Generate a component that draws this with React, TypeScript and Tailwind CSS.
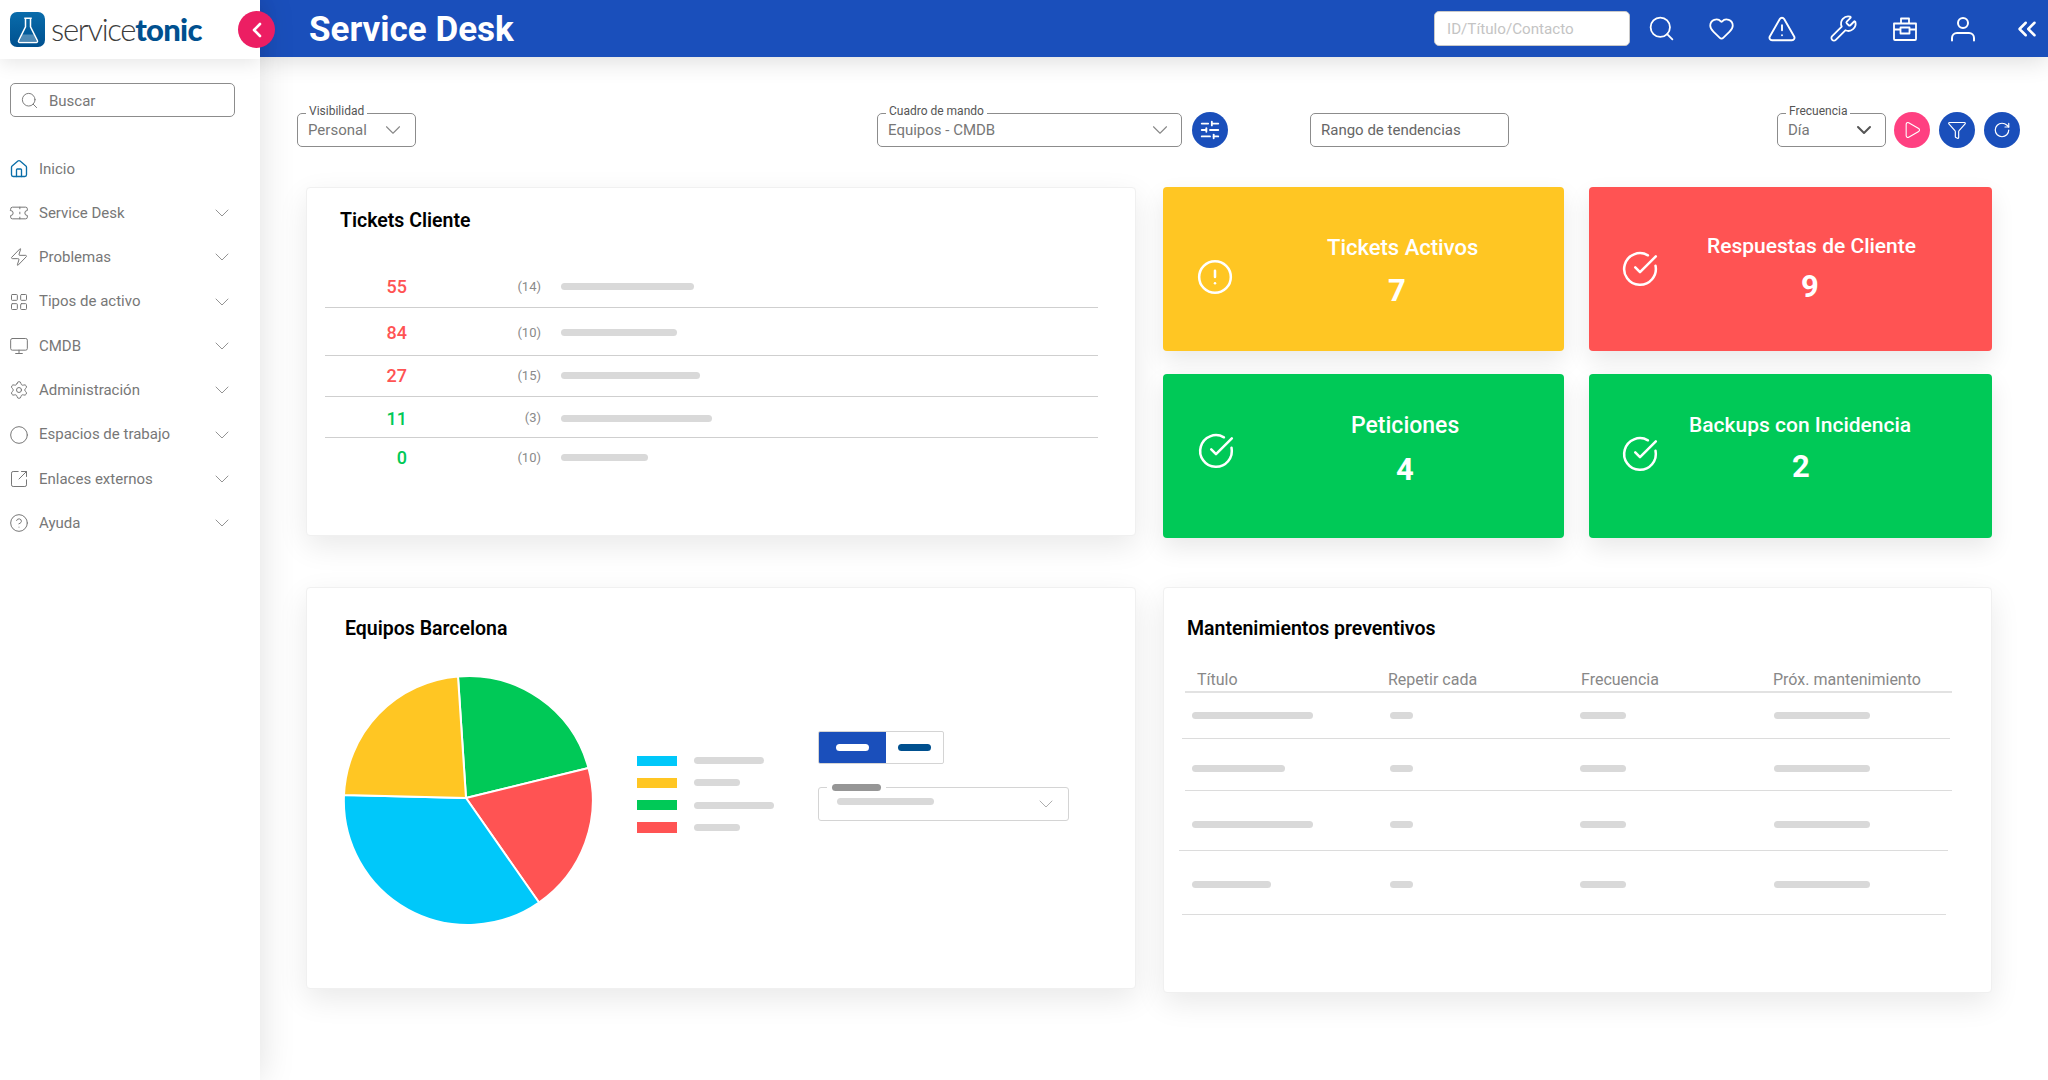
import {
  House, Ticket, Zap, LayoutGrid, Monitor, Settings, Circle, SquareArrowOutUpRight, CircleHelp,
  ChevronDown, ChevronLeft, ChevronsLeft, Search, Heart, TriangleAlert, Wrench,
  Play, Funnel, RotateCw, SlidersHorizontal, CircleCheckBig, CircleAlert,
} from "lucide-react";

const navItems = [
  { label: "Service Desk", icon: Ticket },
  { label: "Problemas", icon: Zap },
  { label: "Tipos de activo", icon: LayoutGrid },
  { label: "CMDB", icon: Monitor },
  { label: "Administración", icon: Settings },
  { label: "Espacios de trabajo", icon: Circle },
  { label: "Enlaces externos", icon: SquareArrowOutUpRight },
  { label: "Ayuda", icon: CircleHelp },
];

const ticketRows = [
  { value: "55", count: "(14)", bar: "w-[133px]", color: "text-[#ff5353]", row: "h-[42px]" },
  { value: "84", count: "(10)", bar: "w-[116px]", color: "text-[#ff5353]", row: "h-[47.5px] pt-[3px]" },
  { value: "27", count: "(15)", bar: "w-[139px]", color: "text-[#ff5353]", row: "h-[41.5px]" },
  { value: "11", count: "(3)", bar: "w-[151px]", color: "text-[#00c957]", row: "h-[41px] pt-[2px]" },
  { value: "0", count: "(10)", bar: "w-[87px]", color: "text-[#00c957]", row: "h-[44px] pb-[5px] !border-b-0" },
];

const legend = [
  { color: "bg-[#00c8fa]", bar: "w-[70px]" },
  { color: "bg-[#ffc623]", bar: "w-[46px]" },
  { color: "bg-[#00c957]", bar: "w-[80px]" },
  { color: "bg-[#ff5353]", bar: "w-[46px]" },
];

const maintRows = [
  { title: "w-[121px]", row: "h-[46px] ml-[18px] w-[768px]", bar: "mt-[1px] pl-[10px]" },
  { title: "w-[93px]", row: "h-[52px] ml-[21px] w-[767px]", bar: "mt-[9px] pl-[7px]" },
  { title: "w-[121px]", row: "h-[60px] ml-[15px] w-[769px]", bar: "mt-[9px] pl-[13px]" },
  { title: "w-[79px]", row: "h-[64px] ml-[18px] w-[764px]", bar: "mt-[5px] pl-[10px]" },
];

function Bar({ className }: { className: string }) {
  return <div className={"h-[7px] rounded-full bg-[#d9d9d9] " + className} />;
}

function Field({ label, text, className, chevron, stroke = 1 }: { label: string; text: string; className: string; chevron: string; stroke?: number }) {
  return (
    <div className={"relative flex h-[34px] items-center justify-between rounded-[5px] border border-[#8c8c8c] pl-[10px] text-[15px] text-[#777] " + className}>
      <span className="absolute left-[8px] top-[-10px] bg-white px-[3px] text-[12px] leading-[14px] text-[#555]">{label}</span>
      <span>{text}</span>
      <ChevronDown className={chevron} strokeWidth={stroke} />
    </div>
  );
}

function RoundButton({ color, children, className = "" }: { color: string; children: React.ReactNode; className?: string }) {
  return <div className={"flex h-[36px] w-[36px] items-center justify-center rounded-full text-white " + color + " " + className}>{children}</div>;
}

function StatCard(props: { title: string; value: string; color: string; icon: "alert" | "check"; iconClass: string; titleClass: string; valueClass: string }) {
  const Icon = props.icon === "alert" ? CircleAlert : CircleCheckBig;
  return (
    <div className={"relative h-[163.5px] rounded-[4px] text-white shadow-[0_10px_24px_rgba(0,0,0,0.09)] " + props.color}>
      <Icon className={"absolute h-[38px] w-[38px] " + props.iconClass} strokeWidth={1.6} />
      <div className={"absolute whitespace-nowrap text-center font-medium leading-[26px] " + props.titleClass}>{props.title}</div>
      <div className={"absolute text-center text-[31px] font-bold leading-[36px] " + props.valueClass}>{props.value}</div>
    </div>
  );
}

export default function App() {
  return (
    <div className="flex h-[1080px] w-full overflow-hidden bg-white text-[#777] [font-family:Roboto,sans-serif]">
      <aside className="relative z-20 flex w-[260px] shrink-0 flex-col bg-white shadow-[0_0_34px_rgba(0,0,0,0.13)]">
        <div className="flex h-[59px] items-center pl-[10px] shadow-[0_4px_18px_rgba(0,0,0,0.1)]">
          <div className="flex h-[35px] w-[35px] items-center justify-center rounded-[7px] bg-gradient-to-b from-[#0a6cab] to-[#00508f]">
            <svg viewBox="0 0 24 24" className="h-[30px] w-[30px]" fill="none" stroke="white" strokeWidth="1.2">
              <path d="M9 2.500h6M10 2.500v7L4.500 20.500a1 1 0 0 0 1 1.500h13a1 1 0 0 0 1-1.500L14 9.500v-7" />
              <path d="M7.500 15.500h9l2.300 5.700H5.200z" fill="white" stroke="none" opacity="0.3" />
            </svg>
          </div>
          <div className="ml-[6px] whitespace-nowrap text-[31px] leading-none [font-family:Lato,sans-serif]">
            <span className="font-light tracking-[-1.3px] text-[#3c3c3c]">service</span>
            <span className="font-black tracking-[-0.7px] text-[#00508f]">tonic</span>
          </div>
        </div>

        <div className="mx-[10px] mt-[24px] flex h-[34px] w-[225px] items-center rounded-[5px] border border-[#8c8c8c] pl-[9px] text-[15px] text-[#777]">
          <Search className="h-[19px] w-[19px]" strokeWidth={1.2} />
          <span className="ml-[10px] pt-[2px]">Buscar</span>
        </div>

        <nav className="mt-[30px] flex flex-col">
          <div className="flex h-[44px] items-center pl-[9px] text-[15px]">
            <House className="h-[20px] w-[20px] text-[#0a6ea8]" strokeWidth={1.6} />
            <span className="ml-[10px]">Inicio</span>
          </div>
          {navItems.map((item) => (
            <div key={item.label} className="flex h-[44.300px] items-center pl-[9px] text-[15px]">
              <item.icon className="h-[20px] w-[20px] text-[#777]" strokeWidth={1.2} />
              <span className="ml-[10px] flex-1">{item.label}</span>
              <ChevronDown className="mr-[26px] h-[24px] w-[24px] text-[#888]" strokeWidth={0.9} />
            </div>
          ))}
        </nav>
      </aside>

      <div className="relative flex min-w-0 flex-1 flex-col">
        <header className="relative z-10 flex h-[57px] items-center bg-[#1a4fbb] pl-[49px] text-white shadow-[0_4px_24px_rgba(0,0,0,0.14)]">
          <h1 className="pt-[1px] text-[35px] font-bold leading-none">Service Desk</h1>
          <div className="ml-auto flex h-[35px] w-[196px] items-center rounded-[5px] border border-[#c9c9c9] bg-white pl-[12px] pt-[1px] text-[15.2px] text-[#c4c4c4]">ID/Título/Contacto</div>
          <Search className="ml-[17px] h-[29px] w-[29px]" strokeWidth={1.5} />
          <Heart className="ml-[32px] h-[27px] w-[27px]" strokeWidth={1.6} />
          <TriangleAlert className="ml-[32px] h-[30px] w-[30px]" strokeWidth={1.5} />
          <Wrench className="ml-[32px] h-[29px] w-[29px]" strokeWidth={1.5} />
          <svg viewBox="0 0 24 24" className="ml-[35px] h-[24px] w-[24px]" fill="none" stroke="white" strokeWidth="1.8" strokeLinejoin="round">
            <path d="M1 6.500h22v15.500a1 1 0 0 1-1 1H2a1 1 0 0 1-1-1zM8 6.500V1.500h8v5M1 12.500h6.500M16.500 12.500H23" />
            <path d="M7.500 10.500h9v6h-9z" />
          </svg>
          <svg viewBox="0 0 26 26" className="ml-[33px] h-[26px] w-[26px]" fill="none" stroke="white" strokeWidth="2" strokeLinecap="round">
            <circle cx="13" cy="7" r="5" />
            <path d="M2 24.500v-2.500a5 5 0 0 1 5-5h12a5 5 0 0 1 5 5v2.500" />
          </svg>
          <ChevronsLeft className="ml-[36px] mr-[6px] h-[30px] w-[30px]" strokeWidth={2} />
        </header>

        <div className="absolute left-[-22px] top-[11px] z-30 flex h-[37px] w-[37px] items-center justify-center rounded-full bg-[#ec1e63] text-white">
          <ChevronLeft className="h-[24px] w-[24px]" strokeWidth={2.6} />
        </div>

        <div className="flex items-center pl-[37px] pt-[55px]">
          <Field label="Visibilidad" text="Personal" className="w-[119px]" chevron="mr-[9px] h-[26px] w-[26px] text-[#888]" />
          <Field label="Cuadro de mando" text="Equipos - CMDB" className="ml-[461px] w-[305px]" chevron="mr-[8px] h-[26px] w-[26px] text-[#888]" />
          <RoundButton color="bg-[#1a4fbb]" className="ml-[10px]"><SlidersHorizontal className="h-[22px] w-[22px]" strokeWidth={2} /></RoundButton>
          <div className="ml-[82px] flex h-[34px] w-[199px] items-center rounded-[5px] border border-[#8c8c8c] pl-[10px] text-[15px] text-[#666]">Rango de tendencias</div>
          <Field label="Frecuencia" text="Día" className="ml-[268px] w-[109px]" chevron="mr-[9px] h-[24px] w-[24px] text-[#555]" stroke={2} />
          <RoundButton color="bg-[#ff4081]" className="ml-[8px]"><Play className="h-[20px] w-[20px]" strokeWidth={1.3} /></RoundButton>
          <RoundButton color="bg-[#1a4fbb]" className="ml-[9px]"><Funnel className="h-[20px] w-[20px]" strokeWidth={1.4} /></RoundButton>
          <RoundButton color="bg-[#1a4fbb]" className="ml-[9px]"><RotateCw className="h-[18px] w-[18px]" strokeWidth={1.6} /></RoundButton>
        </div>

        <div className="flex pl-[46px] pt-[39px]">
          <section className="h-[349px] w-[830px] rounded-[4px] border border-[#f0f0f0] bg-white shadow-[0_10px_30px_rgba(0,0,0,0.09)]">
            <h2 className="pl-[33px] pt-[21px] text-[19.5px] font-semibold leading-[24px] text-black">Tickets Cliente</h2>
            <div className="ml-[18px] mt-[33px] w-[773px]">
              {ticketRows.map((row) => (
                <div key={row.value} className={"flex items-center border-b border-[#cfcfcf] " + row.row}>
                  <span className={"w-[82px] text-right text-[18px] font-medium " + row.color}>{row.value}</span>
                  <span className="w-[134px] text-right text-[13px] text-[#8a8a8a]">{row.count}</span>
                  <Bar className={"ml-[20px] " + row.bar} />
                </div>
              ))}
            </div>
          </section>

          <div className="ml-[27px] grid h-fit w-[829px] grid-cols-[401px_403px] gap-x-[25px] gap-y-[23.5px]">
            <StatCard title="Tickets Activos" value="7" color="bg-[#ffc623]" icon="alert" iconClass="left-[33px] top-[71px]" titleClass="left-[164px] top-[48px] text-[22px]" valueClass="left-[225px] top-[86px]" />
            <StatCard title="Respuestas de Cliente" value="9" color="bg-[#ff5353]" icon="check" iconClass="left-[32px] top-[63px]" titleClass="left-[118px] top-[46px] text-[21px]" valueClass="left-[212px] top-[82px]" />
            <StatCard title="Peticiones" value="4" color="bg-[#00c957]" icon="check" iconClass="left-[34px] top-[58px]" titleClass="left-[188px] top-[39px] text-[23px]" valueClass="left-[233px] top-[78px]" />
            <StatCard title="Backups con Incidencia" value="2" color="bg-[#00c957]" icon="check" iconClass="left-[32px] top-[61px]" titleClass="left-[100px] top-[38px] text-[21px]" valueClass="left-[203px] top-[75px]" />
          </div>
        </div>

        <div className="flex pl-[46px] pt-[49px]">
          <section className="h-[402px] w-[830px] rounded-[4px] border border-[#f0f0f0] bg-white shadow-[0_10px_30px_rgba(0,0,0,0.09)]">
            <h2 className="pl-[38px] pt-[29px] text-[19.5px] font-semibold leading-[24px] text-black">Equipos Barcelona</h2>
            <div className="flex">
              <svg viewBox="0 0 260 260" className="ml-[33px] mt-[29px] h-[260px] w-[260px] shrink-0" stroke="white" strokeWidth="2" strokeLinejoin="round">
                <path d="M126 128 L118 6.500 A124 124 0 0 1 248.500 98 Z" fill="#00c957" />
                <path d="M126 128 L248.500 98 A124 124 0 0 1 199 232.500 Z" fill="#ff5353" />
                <path d="M126 128 L199 232.500 A124 124 0 0 1 4 125 Z" fill="#00c8fa" />
                <path d="M126 128 L4 125 A124 124 0 0 1 118 6.500 Z" fill="#ffc623" />
              </svg>
              <div className="ml-[37px] mt-[115px] flex h-fit flex-col gap-[12px]">
                {legend.map((item) => (
                  <div key={item.color} className="flex h-[10.300px] items-center">
                    <div className={"h-full w-[40px] " + item.color} />
                    <Bar className={"ml-[17px] " + item.bar} />
                  </div>
                ))}
              </div>
              <div className="ml-[44px] mt-[90px] flex flex-col">
                <div className="flex h-[33px] w-[126px] overflow-hidden rounded-[2px] border border-[#d4d4d4]">
                  <div className="flex w-[67px] items-center justify-center bg-[#1a4fbb]"><div className="h-[7px] w-[33px] rounded-full bg-white" /></div>
                  <div className="flex flex-1 items-center justify-center"><div className="h-[7px] w-[33px] rounded-full bg-[#00508f]" /></div>
                </div>
                <div className="relative mt-[23px] flex h-[34px] w-[251px] items-center justify-between rounded-[3px] border border-[#d4d4d4] pl-[18px] pr-[10px]">
                  <div className="absolute left-[8px] top-[-4px] bg-white px-[5px]"><div className="h-[7px] w-[49px] rounded-full bg-[#969696]" /></div>
                  <Bar className="mt-[-4px] w-[97px]" />
                  <ChevronDown className="h-[24px] w-[24px] text-[#999]" strokeWidth={0.8} />
                </div>
              </div>
            </div>
          </section>

          <section className="ml-[27px] h-[406px] w-[829px] rounded-[4px] border border-[#f0f0f0] bg-white shadow-[0_10px_30px_rgba(0,0,0,0.09)]">
            <h2 className="pl-[23px] pt-[29px] text-[19.5px] font-semibold leading-[24px] text-black">Mantenimientos preventivos</h2>
            <div className="ml-[21px] mt-[14px] flex h-[38px] w-[767px] items-center border-b-2 border-[#e2e2e2] pl-[12px] pt-[14px] text-[16px] text-[#888]">
              <span className="w-[191px]">Título</span>
              <span className="w-[193px]">Repetir cada</span>
              <span className="w-[192px]">Frecuencia</span>
              <span>Próx. mantenimiento</span>
            </div>
            {maintRows.map((row) => (
              <div key={row.row} className={"flex items-center border-b border-[#dcdcdc] " + row.row}>
                <div className={"flex items-center " + row.bar}>
                  <div className="w-[198px]"><Bar className={row.title} /></div>
                  <div className="w-[190px]"><Bar className="w-[23px]" /></div>
                  <div className="w-[194px]"><Bar className="w-[46px]" /></div>
                  <Bar className="w-[96px]" />
                </div>
              </div>
            ))}
          </section>
        </div>
      </div>
    </div>
  );
}
